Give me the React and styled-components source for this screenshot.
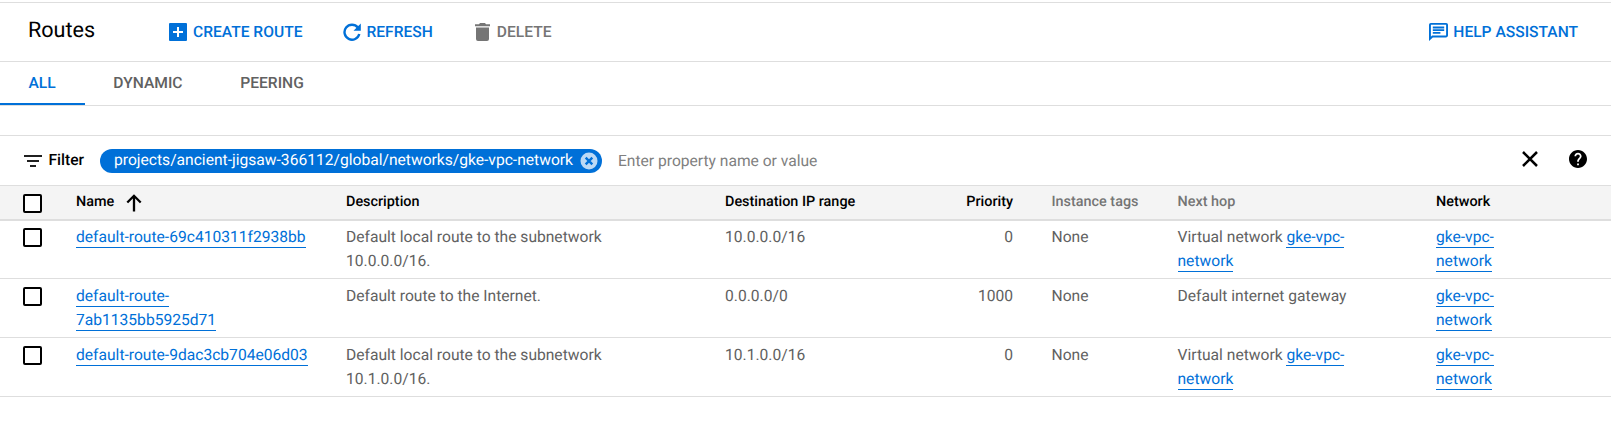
import React from "react";
import styled, { createGlobalStyle } from "styled-components";

const BLUE = "#0070d8";
const LINE = "#dedede";

const GlobalStyle = createGlobalStyle`
  * { box-sizing: border-box; }
  body { margin: 0; background: #fff; }
`;

const Page = styled.main`
  height: 436px;
  padding-top: 2px;
  font-family: Roboto, sans-serif;
  font-size: 15.62px;
  text-rendering: geometricPrecision;
  color: #616161;
  background: #fff;
`;

const Toolbar = styled.header`
  display: flex;
  align-items: center;
  height: 60px;
  padding: 0 33px 0 28px;
  border-top: 1px solid ${LINE};
  border-bottom: 1px solid ${LINE};
`;

const Title = styled.h1`
  width: 141px;
  margin: 0 0 2px;
  font-size: 21.6px;
  font-weight: 400;
  line-height: 28px;
  color: #000;
`;

const Action = styled.button`
  display: flex;
  align-items: center;
  gap: ${(p) => p.$gap ?? 6}px;
  margin: 0 ${(p) => p.$after ?? 0}px 0 0;
  padding: 0;
  border: 0;
  background: none;
  font: 500 15.6px/24px Roboto, sans-serif;
  text-rendering: inherit;
  white-space: nowrap;
  color: ${(p) => (p.$muted ? "#757575" : BLUE)};
`;

const Spacer = styled.div`
  flex: 1;
`;

const Tabs = styled.nav`
  display: flex;
  height: 44px;
  border-bottom: 1px solid ${LINE};
`;

const Tab = styled.a`
  display: flex;
  align-items: center;
  height: 43px;
  padding: 0 29.3px 0 28.4px;
  border-bottom: 2px solid ${(p) => (p.$active ? BLUE : "transparent")};
  font-weight: 500;
  color: ${(p) => (p.$active ? BLUE : "#616161")};
`;

const FilterBar = styled.section`
  display: flex;
  align-items: center;
  height: 51px;
  margin-top: 29px;
  padding: 0 24px;
  border-top: 1px solid ${LINE};
  border-bottom: 1px solid ${LINE};
`;

const FilterLabel = styled.span`
  width: 51.5px;
  margin: 0 0 1px 6.5px;
  font-weight: 500;
  color: #000;
`;

const Chip = styled.span`
  display: flex;
  align-items: center;
  justify-content: space-between;
  width: 502px;
  height: 24px;
  padding: 0 4px 0 14px;
  border-radius: 12px;
  background: ${BLUE};
  line-height: 22px;
  color: #fff;
  white-space: nowrap;
`;

const ChipText = styled.span`
  padding-bottom: 2px;
`;

const Placeholder = styled.span`
  margin-left: 16px;
  font-size: 15.6px;
  color: #808080;
`;

const FilterTools = styled.div`
  display: flex;
  gap: 30px;
  margin: 0 0 3px auto;
`;

const Row = styled.div`
  display: grid;
  grid-template-columns: 53px 270px 379px 240px 86.5px 126px 258.5px 1fr;
  height: ${(p) => (p.$first ? 58 : 59)}px;
  padding: ${(p) => (p.$first ? 4 : 5)}px 0 0 23px;
  border-bottom: 1px solid ${LINE};
  line-height: 24px;
`;

const HeadRow = styled(Row)`
  height: 35px;
  padding-top: 3px;
  border-bottom: 2px solid ${LINE};
  background: #f4f4f4;
  font-size: 14.4px;
`;

const HeadCell = styled.div`
  display: flex;
  align-items: center;
  height: 26px;
  gap: 12px;
  padding-right: ${(p) => (p.$right ? 38.5 : 0)}px;
  justify-content: ${(p) => (p.$right ? "flex-end" : "flex-start")};
  font-weight: 500;
  color: ${(p) => (p.$muted ? "#757575" : "#000")};
  white-space: nowrap;
`;

const Cell = styled.div`
  width: ${(p) => (p.$width ? `${p.$width}px` : "auto")};
  padding-right: ${(p) => (p.$right ? 38.5 : 0)}px;
  text-align: ${(p) => (p.$right ? "right" : "left")};
`;

const Checkbox = styled.span`
  display: block;
  width: 19px;
  height: 19px;
  margin-top: ${(p) => p.$top ?? 3}px;
  border: 2px solid #000;
  border-radius: 2px;
  background: #fff;
`;

const Link = styled.a`
  padding-bottom: 1px;
  border-bottom: 1px solid ${BLUE};
  color: ${BLUE};
`;

const PlusIcon = () => (
  <svg width="18" height="18" viewBox="3 3 18 18" fill="currentColor">
    <path d="M20 3H4a1 1 0 0 0-1 1v16a1 1 0 0 0 1 1h16a1 1 0 0 0 1-1V4a1 1 0 0 0-1-1zm-3 10h-4v4h-2v-4H7v-2h4V7h2v4h4v2z" />
  </svg>
);

const RefreshIcon = () => (
  <svg width="18" height="18" viewBox="0 0 18 18">
    <path d="M14.8 4.4A7.5 7.5 0 1 0 16.3 11" fill="none" stroke="currentColor" strokeWidth="2.4" />
    <path d="M17.8 .5v7.3h-7.3z" fill="currentColor" />
  </svg>
);

const TrashIcon = () => (
  <svg width="15" height="18" viewBox="0 0 15 18" fill="currentColor">
    <path d="M0 1.2h4L5 0h5l1 1.2h4v2H0zM1 4.6h13V16a2 2 0 0 1-2 2H3a2 2 0 0 1-2-2z" />
  </svg>
);

const ChatIcon = () => (
  <svg width="19" height="18" viewBox="2 2 20 20" preserveAspectRatio="none" fill="currentColor">
    <path d="M4 4h16v12H5.17L4 17.17V4m0-2a2 2 0 0 0-2 2v18l4-4h14a2 2 0 0 0 2-2V4a2 2 0 0 0-2-2H4zm2 10h8v2H6v-2zm0-3h12v2H6V9zm0-3h12v2H6V6z" />
  </svg>
);

const FilterIcon = () => (
  <svg width="18" height="12" viewBox="0 0 18 12" fill="#202020">
    <path d="M0 0h18v2H0zM3 5h12v2H3zM6 10h6v2H6z" />
  </svg>
);

const ChipClose = () => (
  <svg width="18" height="18" viewBox="0 0 18 18">
    <circle cx="9" cy="9" r="8.5" fill="#bcd9f5" />
    <path d="M5.7 5.7l6.6 6.6M12.3 5.7l-6.6 6.6" stroke={BLUE} strokeWidth="2.4" />
  </svg>
);

const CloseIcon = () => (
  <svg width="18" height="18" viewBox="0 0 18 18">
    <path d="M2 2l14 14M16 2L2 16" stroke="#000" strokeWidth="2.5" />
  </svg>
);

const HelpIcon = () => (
  <svg width="18" height="18" viewBox="2 2 20 20">
    <path d="M12 2C6.48 2 2 6.48 2 12s4.48 10 10 10 10-4.48 10-10S17.52 2 12 2zm1 17h-2v-2h2v2zm2.07-7.75l-.9.92C13.45 12.9 13 13.5 13 15h-2v-.5c0-1.1.45-2.1 1.17-2.83l1.24-1.26c.37-.36.59-.86.59-1.41 0-1.1-.9-2-2-2s-2 .9-2 2H8c0-2.21 1.79-4 4-4s4 1.79 4 4c0 .88-.36 1.68-.93 2.25z" />
  </svg>
);

const SortIcon = styled.svg`
  margin-top: 1px;
`;

const ArrowUp = () => (
  <SortIcon width="16" height="18" viewBox="0 0 16 18">
    <path d="M8 17.5V2M1.3 8.5L8 1.8l6.7 6.7" fill="none" stroke="#000" strokeWidth="2.3" />
  </SortIcon>
);

const ROUTES = [
  { name: "default-route-69c410311f2938bb", description: "Default local route to the subnetwork 10.0.0.0/16.", range: "10.0.0.0/16", priority: 0, virtual: true },
  { name: "default-route-7ab1135bb5925d71", description: "Default route to the Internet.", range: "0.0.0.0/0", priority: 1000, virtual: false },
  { name: "default-route-9dac3cb704e06d03", description: "Default local route to the subnetwork 10.1.0.0/16.", range: "10.1.0.0/16", priority: 0, virtual: true },
];

export default function App() {
  return (
    <Page>
      <GlobalStyle />
      <Toolbar>
        <Title>Routes</Title>
        <Action $after={41}><PlusIcon />CREATE ROUTE</Action>
        <Action $after={42} $gap={5}><RefreshIcon />REFRESH</Action>
        <Action $muted $gap={7}><TrashIcon />DELETE</Action>
        <Spacer />
        <Action $gap={5}><ChatIcon />HELP ASSISTANT</Action>
      </Toolbar>
      <Tabs>
        <Tab $active>ALL</Tab>
        <Tab>DYNAMIC</Tab>
        <Tab>PEERING</Tab>
      </Tabs>
      <FilterBar>
        <FilterIcon />
        <FilterLabel>Filter</FilterLabel>
        <Chip>
          <ChipText>projects/ancient-jigsaw-366112/global/networks/gke-vpc-network</ChipText>
          <ChipClose />
        </Chip>
        <Placeholder>Enter property name or value</Placeholder>
        <FilterTools><CloseIcon /><HelpIcon /></FilterTools>
      </FilterBar>
      <HeadRow>
        <Checkbox $top={5} />
        <HeadCell>Name<ArrowUp /></HeadCell>
        <HeadCell>Description</HeadCell>
        <HeadCell>Destination IP range</HeadCell>
        <HeadCell $right>Priority</HeadCell>
        <HeadCell $muted>Instance tags</HeadCell>
        <HeadCell $muted>Next hop</HeadCell>
        <HeadCell>Network</HeadCell>
      </HeadRow>
      {ROUTES.map((r, i) => (
        <Row key={r.name} $first={i === 0}>
          <Checkbox />
          <Cell $width={232.2}><Link>{r.name}</Link></Cell>
          <Cell $width={275}>{r.description}</Cell>
          <Cell>{r.range}</Cell>
          <Cell $right>{r.priority}</Cell>
          <Cell>None</Cell>
          <Cell $width={180}>
            {r.virtual ? <>Virtual network <Link>gke-vpc-network</Link></> : "Default internet gateway"}
          </Cell>
          <Cell $width={80}><Link>gke-vpc-network</Link></Cell>
        </Row>
      ))}
    </Page>
  );
}
